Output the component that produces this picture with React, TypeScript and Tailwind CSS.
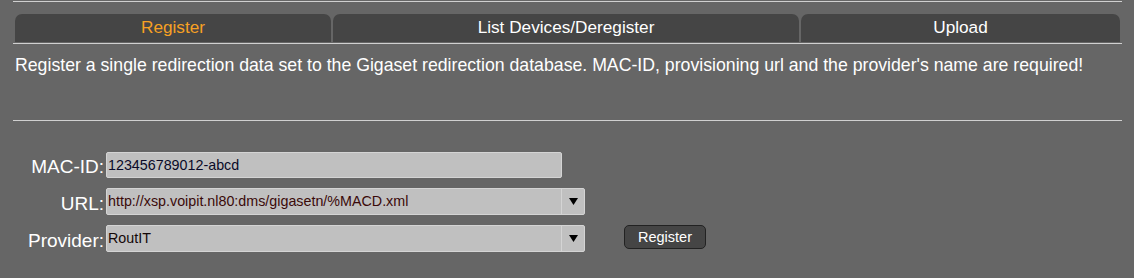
import React from 'react';

const tabs = [
  { label: 'Register', w: 'w-[316px]', active: true },
  { label: 'List Devices/Deregister', w: 'w-[466px]', active: false },
  { label: 'Upload', w: 'w-[319px]', active: false },
];

function Arrow() {
  return (
    <svg width="9" height="7" viewBox="0 0 9 7" className="block">
      <polygon points="0,0 9,0 4.5,7" fill="#000" />
    </svg>
  );
}

function SelectBox({ value, color }: { value: string; color: string }) {
  return (
    <div className="flex h-[27px] w-[479px] rounded-[2px] border border-[#d4d4d4] bg-[#c0c0c0]">
      <div className={`flex-1 pl-[1px] pt-[1px] text-[14.3px] leading-[23px] ${color}`}>{value}</div>
      <div className="flex w-[23px] items-center justify-center border-l border-[#d4d4d4]">
        <Arrow />
      </div>
    </div>
  );
}

export default function App() {
  return (
    <div className="h-[278px] w-full bg-[#666666] font-['Liberation_Sans',Arial,sans-serif] text-white">
      <div className="ml-[13px] w-[1109px] pt-px">
        <div className="h-px bg-[#d0d0d0]" />

        {/* Tabs */}
        <div className="mt-[12px] flex h-[28px] gap-[2px] px-[2px]">
          {tabs.map(t => (
            <div key={t.label}
              className={`${t.w} rounded-t-[7px] bg-[#454545] pt-[3px] text-center text-[17.2px] leading-[20px] ${t.active ? 'text-[#f7a123]' : 'text-white'}`}>
              {t.label}
            </div>
          ))}
        </div>
        <div className="mt-px h-px bg-[#d0d0d0]" />

        <p className="mt-[11px] pl-[2px] text-[17.7px] leading-[20px]">
          Register a single redirection data set to the Gigaset redirection database. MAC-ID, provisioning url and the provider's name are required!
        </p>

        <div className="mt-[45px] h-px bg-[#d0d0d0]" />

        {/* Form */}
        <div className="mt-[31px] flex flex-col gap-[10px]">
          <div className="flex items-end">
            <div className="w-[91px] text-right text-[19px] leading-[22px]">MAC-ID:</div>
            <div className="ml-[2px] h-[26px] w-[456px] rounded-[2px] border border-[#d4d4d4] bg-[#c0c0c0] pl-[1px] pt-[1px] text-[14.3px] leading-[22px] text-[#0a0a28]">
              123456789012-abcd
            </div>
          </div>
          <div className="flex items-end">
            <div className="w-[91px] text-right text-[19px] leading-[22px]">URL:</div>
            <div className="ml-[2px]">
              <SelectBox value="http://xsp.voipit.nl80:dms/gigasetn/%MACD.xml" color="text-[#3a0a0a]" />
            </div>
          </div>
          <div className="flex items-end">
            <div className="w-[91px] text-right text-[19px] leading-[22px]">Provider:</div>
            <div className="ml-[2px] flex items-start">
              <SelectBox value="RoutIT" color="text-[#140808]" />
              <button className="ml-[39px] h-[24px] w-[82px] rounded-[5px] border border-[#222222] bg-[#454545] text-[14.5px] leading-[20px] text-white">
                Register
              </button>
            </div>
          </div>
        </div>
      </div>
    </div>
  );
}
